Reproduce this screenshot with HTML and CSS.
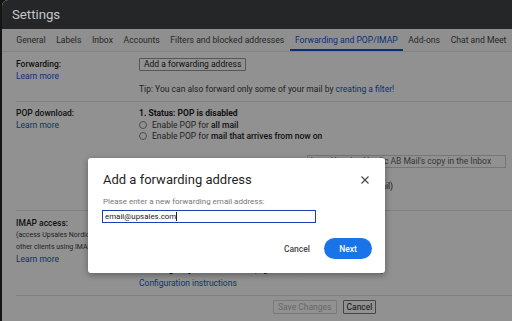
FILE: index.html
```html
<!DOCTYPE html>
<html lang="en">
<head>
    <meta charset="UTF-8">
    <meta name="viewport" content="width=device-width, initial-scale=1.0">
    <title>Settings - Forwarding and POP/IMAP</title>
    <link rel="stylesheet" href="styles.css">
</head>
<body>
    <div class="window">
        <header class="topbar">
            <h1>Settings</h1>
        </header>
        <div class="panel">
            <nav class="tabs">
                <a class="tab">General</a>
                <a class="tab">Labels</a>
                <a class="tab">Inbox</a>
                <a class="tab">Accounts</a>
                <a class="tab">Filters and blocked addresses</a>
                <a class="tab active">Forwarding and POP/IMAP</a>
                <a class="tab">Add-ons</a>
                <a class="tab">Chat and Meet</a>
            </nav>

            <section class="row row-forwarding">
                <div class="label">
                    <b>Forwarding:</b>
                    <a class="link">Learn more</a>
                </div>
                <div class="value">
                    <button class="btn">Add a forwarding address</button>
                    <p class="tip">Tip: You can also forward only some of your mail by <a class="link">creating a filter!</a></p>
                </div>
            </section>

            <section class="row row-pop">
                <div class="label">
                    <b>POP download:</b>
                    <a class="link">Learn more</a>
                </div>
                <div class="value">
                    <div class="step">
                        <b>1. Status: POP is disabled</b>
                        <label class="radio"><span class="dot"></span>Enable POP for <b>all mail</b></label>
                        <label class="radio"><span class="dot"></span>Enable POP for <b>mail that arrives from now on</b></label>
                    </div>
                    <div class="step step-select">
                        <b>2. When messages are accessed with POP</b>
                        <span class="select">keep Upsales Nordic AB Mail's copy in the Inbox</span>
                    </div>
                    <div class="step">
                        <span><b>3. Configure your email client</b> (e.g. Outlook, Eudora, Netscape Mail)</span>
                        <a class="link">Configuration instructions</a>
                    </div>
                </div>
            </section>

            <section class="row row-imap">
                <div class="label">
                    <b>IMAP access:</b>
                    <span class="note">(access Upsales Nordic AB Mail from other clients using IMAP)</span>
                    <a class="link">Learn more</a>
                </div>
                <div class="value">
                    <div class="step">
                        <b>1. Status: IMAP is disabled</b>
                        <label class="radio"><span class="dot"></span>Enable IMAP</label>
                        <label class="radio"><span class="dot"></span>Disable IMAP</label>
                    </div>
                    <div class="step step-last">
                        <span><b>2. Configure your email client</b> (e.g. Outlook, Thunderbird, iPhone)</span>
                        <a class="link">Configuration instructions</a>
                    </div>
                </div>
            </section>

            <div class="actions">
                <button class="btn" disabled>Save Changes</button>
                <button class="btn btn-cancel">Cancel</button>
            </div>

            <div class="scrim"></div>
        </div>

        <div class="dialog">
            <div class="dialog-head">
                <h2>Add a forwarding address</h2>
                <button class="close" aria-label="Close">
                    <svg width="8" height="8" viewBox="0 0 8 8"><path d="M0.5 0.5L7.5 7.5M7.5 0.5L0.5 7.5" stroke="#444" stroke-width="1.1" fill="none"/></svg>
                </button>
            </div>
            <p class="dialog-text">Please enter a new forwarding email address:</p>
            <div class="field"><span>email@upsales.com</span><span class="caret"></span></div>
            <div class="dialog-actions">
                <button class="text-btn">Cancel</button>
                <button class="next">Next</button>
            </div>
        </div>
    </div>
</body>
</html>
```

FILE: styles.css
```css
body {
    margin: 0;
    background: #141415;
    font-family: Roboto, 'Liberation Sans', Arial, sans-serif;
    font-size: 8.5px;
    color: #202124;
    overflow: hidden;
}

.window {
    margin-left: 2px;
    height: 321px;
    background: #fff;
    border-top-left-radius: 6px;
    overflow: hidden;
    position: relative;
}

.topbar {
    height: 29px;
    background: #252628;
    display: flex;
    align-items: center;
    padding-left: 10px;
}

.topbar h1 {
    margin: 0;
    font-size: 13.2px;
    font-weight: 400;
    color: #c6c7c9;
}

.panel {
    position: relative;
    height: 292px;
}

.tabs {
    display: flex;
    height: 22px;
    padding-left: 9px;
    border-bottom: 1px solid #e6e6e6;
    background: #fbfbfb;
}

.tab {
    padding: 0 5.3px;
    font-size: 8.6px;
    line-height: 22px;
    color: #444746;
    position: relative;
}

.tab.active {
    color: #0b57d0;
}

.tab.active::after {
    content: "";
    position: absolute;
    left: 0;
    right: 0;
    bottom: 0;
    height: 2px;
    background: #0b57d0;
}

.row {
    display: flex;
    margin-left: 14px;
    padding: 6px 0;
    border-bottom: 1px solid #e3e3e3;
    line-height: 12px;
}

.label {
    width: 123px;
    display: flex;
    flex-direction: column;
    flex-shrink: 0;
}

.label b {
    font-weight: 500;
}

.link {
    color: #1a56c8;
}

.value {
    display: flex;
    flex-direction: column;
}

.btn {
    font-family: inherit;
    font-size: 8.5px;
    color: #202124;
    background: #fff;
    border: 1px solid #9a9a9a;
    border-radius: 1px;
    padding: 0 4px;
    height: 13px;
    line-height: 11px;
}

.row-forwarding .btn {
    align-self: flex-start;
}

.tip {
    margin: 12px 0 0;
    color: #3c3c3c;
}

.row-pop {
    padding-top: 5px;
}

.step {
    display: flex;
    flex-direction: column;
}

.step b {
    font-weight: 700;
}

.step + .step {
    margin-top: 12px;
}

.radio {
    display: flex;
    align-items: center;
    gap: 5px;
    height: 11.5px;
    color: #3c3c3c;
}

.radio b {
    color: #202124;
    font-weight: 500;
    margin-left: -3px;
}

.dot {
    width: 6px;
    height: 6px;
    border: 1px solid #8a8a8a;
    border-radius: 50%;
}

.step.step-select {
    flex-direction: row;
    align-items: center;
    gap: 6px;
    margin-top: 13px;
}

.select {
    width: 194px;
    height: 11px;
    line-height: 11px;
    padding-left: 3px;
    border: 1px solid #cfcfcf;
    color: #5f6368;
}

.note {
    font-size: 7px;
    line-height: 12px;
    color: #3c3c3c;
}

.step.step-last {
    margin-top: 11px;
}

.step-last .link {
    margin-top: 2px;
}

.actions {
    display: flex;
    gap: 6px;
    margin: 4px 0 0 14px;
    padding-left: 257px;
}

.actions .btn {
    height: 14px;
    padding: 0 4px;
}

.actions .btn-cancel {
    padding: 0 3px;
    border-color: #7a7a7a;
}

.actions .btn[disabled] {
    color: #b8b8b8;
    border-color: #d6d6d6;
}

.scrim {
    position: absolute;
    inset: 0;
    background: rgba(0, 0, 0, 0.43);
}

.dialog {
    position: absolute;
    left: 86px;
    top: 158px;
    width: 297px;
    box-sizing: border-box;
    padding: 13px 13px 14px 15px;
    background: #fff;
    border-radius: 3px;
    box-shadow: 0 2px 6px rgba(0, 0, 0, 0.35);
}

.dialog-head {
    display: flex;
    justify-content: space-between;
    align-items: center;
}

.dialog-head h2 {
    margin: 0;
    font-size: 13px;
    font-weight: 400;
    line-height: 18px;
    color: #1f1f1f;
}

.close {
    border: none;
    background: none;
    padding: 0;
    width: 8px;
    height: 8px;
    margin-right: 3px;
    display: flex;
}

.dialog-text {
    margin: 7px 0 2px;
    font-size: 8px;
    line-height: 12px;
    color: #777;
}

.field {
    width: 214px;
    height: 13px;
    box-sizing: border-box;
    margin-left: -1px;
    border: 1px solid #1d3fb0;
    padding-left: 2px;
    display: flex;
    align-items: center;
    font-size: 7.9px;
    color: #202124;
}

.caret {
    width: 1px;
    height: 9px;
    background: #202124;
}

.dialog-actions {
    display: flex;
    justify-content: flex-end;
    align-items: center;
    gap: 12px;
    margin-top: 15px;
}

.text-btn {
    border: none;
    background: none;
    font-family: inherit;
    font-size: 8.5px;
    font-weight: 500;
    color: #444746;
    padding: 0 2px;
}

.next {
    width: 48px;
    height: 21px;
    border: none;
    border-radius: 11px;
    background: #1a73e8;
    color: #fff;
    font-family: inherit;
    font-size: 8.5px;
    font-weight: 500;
}
```
